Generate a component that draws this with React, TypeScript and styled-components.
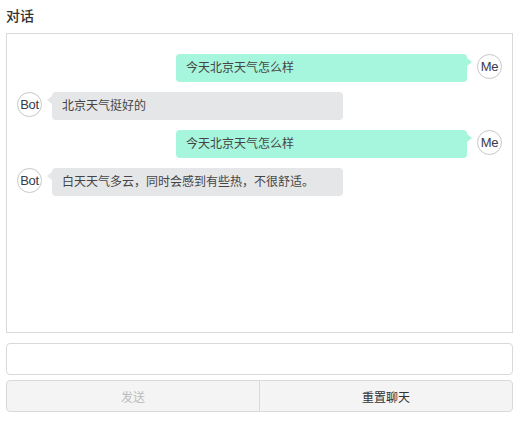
import React from 'react';
import styled, { createGlobalStyle } from 'styled-components';

const GlobalStyle = createGlobalStyle`
  body {
    margin: 0;
    background: #fff;
    font-family: "Liberation Sans", "Noto Sans CJK SC", sans-serif;
    color: #333;
  }
`;

const Page = styled.div`
  padding: 6px 8px 0 6px;
  display: flex;
  flex-direction: column;
`;

const Title = styled.div`
  font-size: 14px;
  line-height: 20px;
  font-weight: 500;
  color: #333;
  margin-bottom: 7px;
`;

const ChatBox = styled.div`
  height: 300px;
  box-sizing: border-box;
  border: 1px solid #d9d9d9;
  padding: 20px 10px;
  display: flex;
  flex-direction: column;
  gap: 10px;
  overflow-y: auto;
`;

const Row = styled.div<{ $mine: boolean }>`
  display: flex;
  flex-direction: ${({ $mine }) => ($mine ? 'row-reverse' : 'row')};
  align-items: flex-start;
  gap: 10px;
`;

const Avatar = styled.div`
  width: 25px;
  height: 25px;
  box-sizing: border-box;
  border: 1px solid #c8c8c8;
  border-radius: 50%;
  background: #fff;
  display: flex;
  align-items: center;
  justify-content: center;
  font-size: 13px;
  letter-spacing: -0.3px;
  color: #3a3a4a;
  flex-shrink: 0;
`;

const Bubble = styled.div<{ $mine: boolean }>`
  position: relative;
  width: 60%;
  box-sizing: border-box;
  padding: 6px 10px;
  line-height: 16px;
  font-size: 12px;
  color: #454545;
  border-radius: 4px;
  background: ${({ $mine }) => ($mine ? '#a6f5dd' : '#e5e6e8')};

  &::after {
    content: '';
    position: absolute;
    top: 4px;
    ${({ $mine }) => ($mine ? 'right: -5px;' : 'left: -5px;')}
    border-top: 4.5px solid transparent;
    border-bottom: 4.5px solid transparent;
    ${({ $mine }) =>
      $mine ? 'border-left: 5px solid #a6f5dd;' : 'border-right: 5px solid #e5e6e8;'}
  }
`;

const Input = styled.input`
  margin-top: 10px;
  height: 32px;
  box-sizing: border-box;
  border: 1px solid #d9d9d9;
  border-radius: 4px;
  padding: 0 8px;
  font-size: 12px;
  font-family: inherit;
  outline: none;
`;

const ButtonGroup = styled.div`
  margin-top: 5px;
  display: flex;
  border: 1px solid #d9d9d9;
  border-radius: 4px;
  background: #f4f4f4;
  overflow: hidden;
`;

const Button = styled.button`
  flex: 1;
  height: 30px;
  border: none;
  background: transparent;
  font-family: inherit;
  font-size: 12px;
  color: #333;
  cursor: pointer;

  & + & {
    border-left: 1px solid #d9d9d9;
  }

  &:disabled {
    color: #bbb;
    cursor: default;
  }
`;

const messages = [
  { mine: true, text: '今天北京天气怎么样' },
  { mine: false, text: '北京天气挺好的' },
  { mine: true, text: '今天北京天气怎么样' },
  { mine: false, text: '白天天气多云，同时会感到有些热，不很舒适。' },
];

const App: React.FC = () => (
  <Page>
    <GlobalStyle />
    <Title>对话</Title>
    <ChatBox>
      {messages.map((m, i) => (
        <Row key={i} $mine={m.mine}>
          <Avatar>{m.mine ? 'Me' : 'Bot'}</Avatar>
          <Bubble $mine={m.mine}>{m.text}</Bubble>
        </Row>
      ))}
    </ChatBox>
    <Input />
    <ButtonGroup>
      <Button disabled>发送</Button>
      <Button>重置聊天</Button>
    </ButtonGroup>
  </Page>
);

export default App;
